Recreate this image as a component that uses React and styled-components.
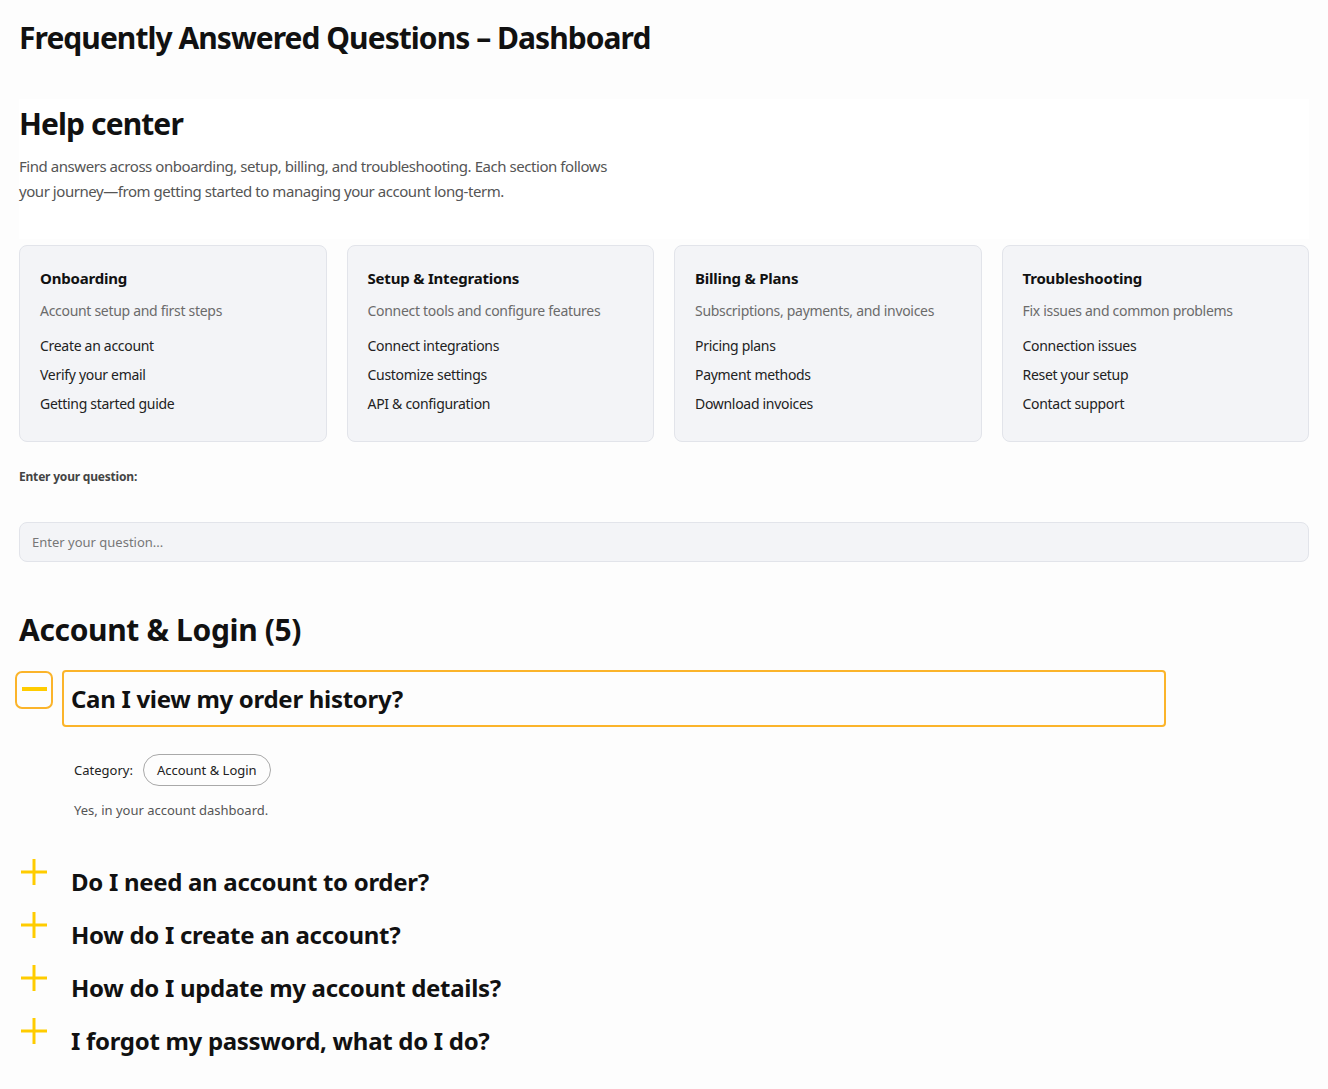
import React, { useState } from "react";
import styled, { createGlobalStyle } from "styled-components";

const Global = createGlobalStyle`
  * { box-sizing: border-box; }
  html, body { margin: 0; padding: 0; background: #fdfdfd; }
  body {
    font-family: "Segoe UI", "Noto Sans", "Open Sans", sans-serif;
    color: #111;
  }
`;

const Page = styled.div`
  padding: 20px 19px 30px;
`;

const Title = styled.h1`
  margin: 0;
  font-size: 30px;
  line-height: 36px;
  font-weight: 700;
  letter-spacing: -0.95px;
`;

const Hero = styled.section`
  margin-top: 43px;
  background: #ffffff;
  padding: 7px 0 35px;
`;

const HeroTitle = styled.h2`
  margin: 0 0 12px;
  font-size: 30px;
  line-height: 36px;
  font-weight: 700;
  letter-spacing: -0.9px;
`;

const Lead = styled.p`
  margin: 0;
  max-width: 612px;
  font-size: 15px;
  line-height: 25px;
  color: #555;
  letter-spacing: -0.45px;
`;

const CardGrid = styled.div`
  margin-top: 6px;
  display: grid;
  grid-template-columns: repeat(4, 1fr);
  gap: 20px;
`;

const Card = styled.div`
  background: #f3f4f7;
  border: 1px solid #e2e4ea;
  border-radius: 8px;
  padding: 22px 20px 27px;
`;

const CardTitle = styled.h3`
  margin: 0;
  font-size: 15px;
  line-height: 20px;
  font-weight: 700;
  letter-spacing: -0.2px;
`;

const CardSub = styled.p`
  margin: 13px 0 15px;
  font-size: 14px;
  line-height: 20px;
  color: #6b6b6b;
  letter-spacing: -0.3px;
`;

const CardList = styled.ul`
  list-style: none;
  margin: 0;
  padding: 0;
  display: flex;
  flex-direction: column;
  gap: 9px;
`;

const CardItem = styled.li`
  font-size: 14px;
  line-height: 20px;
  color: #222;
  letter-spacing: -0.3px;
`;

const Label = styled.label`
  display: block;
  margin-top: 26px;
  font-size: 12px;
  line-height: 18px;
  font-weight: 700;
  color: #444;
  letter-spacing: -0.2px;
`;

const Input = styled.input`
  display: block;
  width: 100%;
  margin-top: 36px;
  height: 40px;
  padding: 0 12px;
  background: #f3f4f7;
  border: 1px solid #e2e4ea;
  border-radius: 8px;
  font-family: inherit;
  font-size: 13px;
  color: #222;
  outline: none;
  &::placeholder { color: #777; }
`;

const SectionTitle = styled.h2`
  margin: 50px 0 24px;
  font-size: 30px;
  line-height: 36px;
  font-weight: 700;
  letter-spacing: -0.35px;
`;

const List = styled.div`
  display: flex;
  flex-direction: column;
`;

const Row = styled.div`
  display: flex;
  align-items: flex-start;
  gap: 15px;
`;

const Toggle = styled.button`
  flex: 0 0 30px;
  width: 30px;
  height: 30px;
  margin-top: ${(p) => (p.$open ? "3px" : "2px")};
  padding: 0;
  border: none;
  background: transparent;
  display: flex;
  align-items: center;
  justify-content: center;
  cursor: pointer;
  border-radius: 3px;
  outline: ${(p) => (p.$open ? "2px solid #fbb42a" : "none")};
  outline-offset: 2px;
`;

const Question = styled.h3`
  flex: 1;
  max-width: 1100px;
  margin: 0;
  padding: 12px 7px;
  font-size: 24px;
  line-height: 29px;
  font-weight: 700;
  letter-spacing: -0.3px;
  border-radius: 2px;
  outline: ${(p) => (p.$open ? "2px solid #fbb42a" : "none")};
  outline-offset: 0;
  cursor: pointer;
`;

const Panel = styled.div`
  padding: 29px 0 35px 55px;
  display: flex;
  flex-direction: column;
  gap: 14px;
`;

const CategoryRow = styled.div`
  display: flex;
  align-items: center;
  gap: 10px;
  font-size: 13px;
  color: #222;
`;

const Pill = styled.span`
  display: inline-flex;
  align-items: center;
  height: 32px;
  padding: 0 13px;
  border: 1px solid #a9a9a9;
  border-radius: 16px;
  font-size: 13px;
  color: #222;
`;

const Answer = styled.p`
  margin: 0;
  font-size: 13px;
  line-height: 20px;
  color: #555;
`;

const Icon = ({ open }) => (
  <svg width="28" height="28" viewBox="0 0 28 28" aria-hidden="true">
    {!open && <line x1="14" y1="1" x2="14" y2="27" stroke="#ffcc00" strokeWidth="3" />}
    {open ? (
      <line x1="2" y1="13" x2="27" y2="13" stroke="#ffcc00" strokeWidth="4" />
    ) : (
      <line x1="1" y1="14" x2="27" y2="14" stroke="#ffcc00" strokeWidth="3" />
    )}
  </svg>
);

const cards = [
  {
    title: "Onboarding",
    sub: "Account setup and first steps",
    items: ["Create an account", "Verify your email", "Getting started guide"],
  },
  {
    title: "Setup & Integrations",
    sub: "Connect tools and configure features",
    items: ["Connect integrations", "Customize settings", "API & configuration"],
  },
  {
    title: "Billing & Plans",
    sub: "Subscriptions, payments, and invoices",
    items: ["Pricing plans", "Payment methods", "Download invoices"],
  },
  {
    title: "Troubleshooting",
    sub: "Fix issues and common problems",
    items: ["Connection issues", "Reset your setup", "Contact support"],
  },
];

const faqs = [
  { q: "Can I view my order history?", a: "Yes, in your account dashboard." },
  { q: "Do I need an account to order?", a: "No, you can check out as a guest." },
  { q: "How do I create an account?", a: "Click Sign up and follow the steps." },
  { q: "How do I update my account details?", a: "Go to Settings and edit your profile." },
  { q: "I forgot my password, what do I do?", a: "Use the Forgot password link on the login page." },
];

export default function App() {
  const [open, setOpen] = useState(0);
  return (
    <Page>
      <Global />
      <Title>Frequently Answered Questions – Dashboard</Title>
      <Hero>
        <HeroTitle>Help center</HeroTitle>
        <Lead>
          Find answers across onboarding, setup, billing, and troubleshooting. Each section follows
          your journey—from getting started to managing your account long-term.
        </Lead>
      </Hero>
      <CardGrid>
        {cards.map((c) => (
          <Card key={c.title}>
            <CardTitle>{c.title}</CardTitle>
            <CardSub>{c.sub}</CardSub>
            <CardList>
              {c.items.map((i) => (
                <CardItem key={i}>{i}</CardItem>
              ))}
            </CardList>
          </Card>
        ))}
      </CardGrid>
      <Label htmlFor="q">Enter your question:</Label>
      <Input id="q" placeholder="Enter your question..." />
      <SectionTitle>Account &amp; Login (5)</SectionTitle>
      <List>
        {faqs.map((f, i) => {
          const isOpen = open === i;
          return (
            <div key={f.q}>
              <Row>
                <Toggle $open={isOpen} onClick={() => setOpen(isOpen ? -1 : i)} aria-expanded={isOpen}>
                  <Icon open={isOpen} />
                </Toggle>
                <Question $open={isOpen} onClick={() => setOpen(isOpen ? -1 : i)}>
                  {f.q}
                </Question>
              </Row>
              {isOpen && (
                <Panel>
                  <CategoryRow>
                    Category: <Pill>Account &amp; Login</Pill>
                  </CategoryRow>
                  <Answer>{f.a}</Answer>
                </Panel>
              )}
            </div>
          );
        })}
      </List>
    </Page>
  );
}
